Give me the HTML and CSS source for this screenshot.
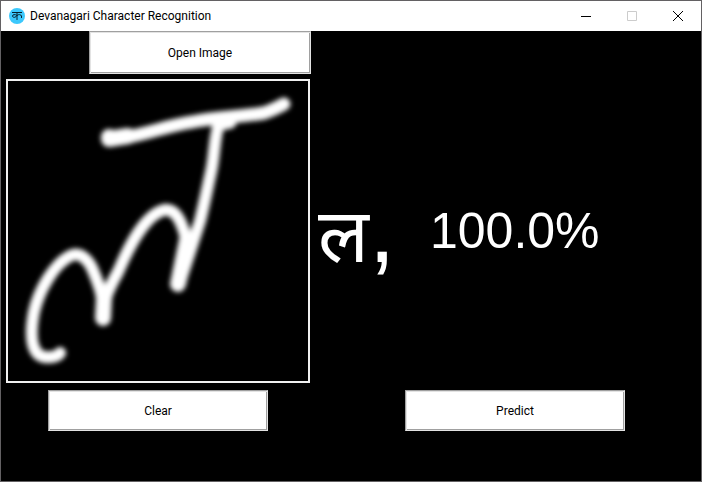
FILE: index.html
```html
<!DOCTYPE html>
<html lang="en">
<head>
<meta charset="utf-8">
<title>Devanagari Character Recognition</title>
<link rel="stylesheet" href="styles.css">
</head>
<body>
<div class="window">
  <header class="titlebar">
    <svg class="app-icon" viewBox="0 0 16 16" aria-hidden="true">
      <circle cx="8" cy="8" r="8" fill="#3cc8fc"/>
      <path d="M3 4.500H13M8 4.500V12M8 7.500C6 6 3.500 6.500 3.500 8C3.500 9.800 6.500 10 8 7.500C9.500 6 12 6.500 12.500 8V10" fill="none" stroke="#06202b"/>
    </svg>
    <h1 class="title">Devanagari Character Recognition</h1>
    <div class="controls">
      <button class="control" type="button" aria-label="Minimize"><svg viewBox="0 0 10 10"><path d="M0 5.500H10"/></svg></button>
      <button class="control" type="button" aria-label="Maximize" disabled><svg viewBox="0 0 10 10"><path d="M.5 .5H9.500V9.500H.5Z"/></svg></button>
      <button class="control" type="button" aria-label="Close"><svg viewBox="0 0 10 10"><path d="M0 0L10 10M10 0L0 10"/></svg></button>
    </div>
  </header>
  <main class="content">
    <section class="input-pane">
      <button class="action open" type="button">Open Image</button>
      <svg class="drawing" viewBox="8 81 300 300" role="img" aria-label="Handwritten character">
        <defs>
          <filter id="soft" x="-10%" y="-10%" width="120%" height="120%" color-interpolation-filters="sRGB"><feGaussianBlur stdDeviation="2.800"/></filter>
        </defs>
        <g class="ink" filter="url(#soft)">
          <path class="bar" d="M109 138L128 137C150 133 170 125 192 122C215 117 240 117 264 113Q273 110 284 104"/>
          <path class="joint" d="M109 137V139L128 136"/>
          <path d="M220 121C214 135 215 155 211 172C207 190 204 205 200 221L180 282"/>
          <path d="M60 353C57 358 43 359 38 354C30 346 31 328 34 312C39 290 54 264 70 256C80 251 88 260 92 268C98 282 105 298 103 318C103 300 109 288 118 272C130 244 145 215 164 210C177 208 183 225 187 243L178 285"/>
          <path class="joint" d="M187 240L178 284M104 298L103 318M219 123L229 121"/>
        </g>
      </svg>
      <button class="action" type="button">Clear</button>
    </section>
    <section class="result-pane">
      <output class="result"><span class="letter"><span lang="hi">ल</span><span class="comma">,</span></span><span class="score">100.0%</span></output>
      <button class="action" type="button">Predict</button>
    </section>
  </main>
</div>
</body>
</html>
```
FILE: styles.css
```css
* { box-sizing: border-box; }

body {
  margin: 0;
  background: #000;
  font-family: Roboto, "Noto Sans", sans-serif;
  font-size: 12px;
}

.window {
  display: flex;
  flex-direction: column;
  min-height: 100vh;
  border: 1px solid #636163;
  background: #000;
}

.titlebar {
  display: flex;
  align-items: center;
  height: 30px;
  padding-left: 8px;
  background: #fff;
}

.app-icon { width: 16px; height: 16px; }

.title {
  flex: 1;
  margin: 0 0 0 5px;
  font-size: 12px;
  font-weight: 400;
  line-height: 16px;
  color: #000;
}

.controls { display: flex; }

.control {
  display: grid;
  place-items: center;
  width: 46px;
  height: 30px;
  padding: 0;
  border: 0;
  background: none;
  color: #000;
}

.control:disabled { color: #ccc; }

.control svg {
  width: 10px;
  height: 10px;
  overflow: visible;
  fill: none;
  stroke: currentColor;
}

.content {
  flex: 1;
  display: grid;
  grid-template-columns: 314px 1fr;
  color: #fff;
}

.input-pane {
  display: flex;
  flex-direction: column;
  align-items: center;
}

.action {
  width: 220px;
  height: 41px;
  padding: 0;
  border: 1px solid;
  border-color: #a0a0a0 #e3e3e3 #e3e3e3 #a0a0a0;
  box-shadow: inset 1px 1px #e3e3e3, inset -1px -1px #a0a0a0;
  background: #fff;
  color: #000;
  font: inherit;
}

.open {
  align-self: flex-end;
  width: 222px;
  height: 43px;
  margin-right: 4px;
}

.drawing {
  width: 304px;
  height: 304px;
  margin: 5px 0 7px;
  border: 2px solid #f0f0f0;
}

.ink {
  fill: none;
  stroke: #fff;
  stroke-width: 12px;
  stroke-linecap: round;
  stroke-linejoin: round;
}

.bar { stroke-width: 13px; }
.joint { stroke-width: 16px; }

.result-pane {
  display: flex;
  flex-direction: column;
  align-items: center;
  padding: 48px 0 0 14px;
}

.result {
  display: flex;
  align-items: center;
  align-self: flex-start;
  height: 304px;
  margin: 0 0 7px -11px;
}

.letter {
  width: 112px;
  font-family: "Noto Sans", "Noto Sans Devanagari", sans-serif;
  font-size: 75px;
  line-height: 100px;
}

.comma {
  font-family: "Liberation Sans", sans-serif;
  font-size: 96px;
}

.score {
  font-family: "Liberation Sans", sans-serif;
  font-size: 50px;
  line-height: 60px;
}
```
